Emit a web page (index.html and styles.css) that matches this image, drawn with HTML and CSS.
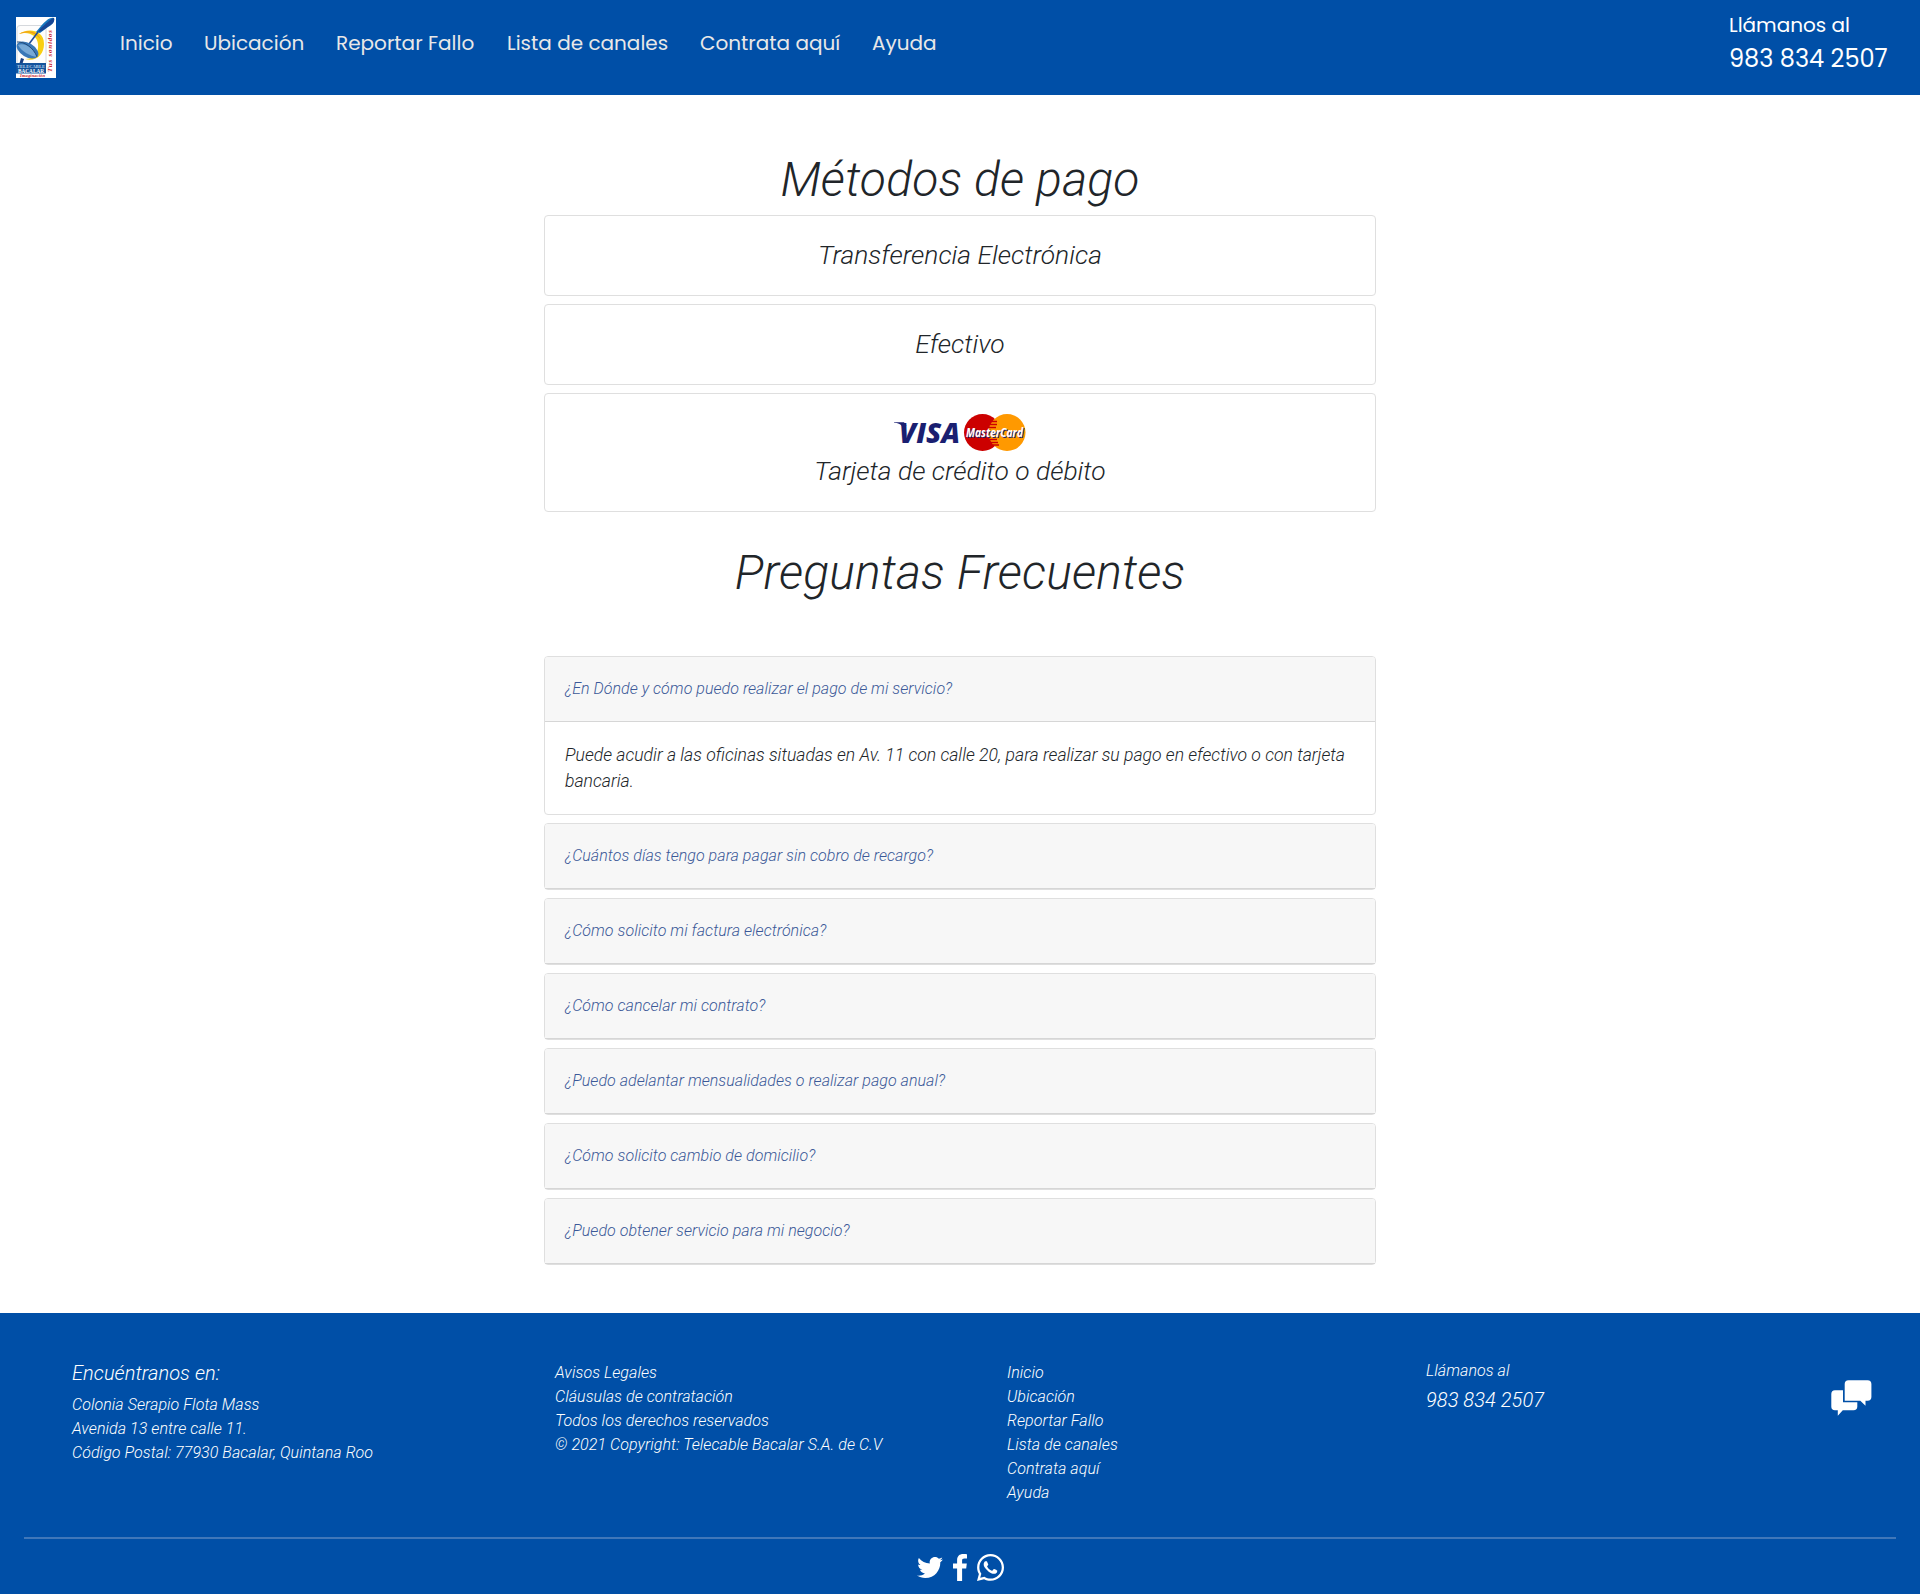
FILE: index.html
```html
<!DOCTYPE html>
<html lang="es">
<head>
<meta charset="utf-8">
<title>Telecable Bacalar - Ayuda</title>
<link rel="stylesheet" href="styles.css">
</head>
<body>
<header class="navbar">
  <a class="brand" href="#" aria-label="Telecable Bacalar">
    <svg width="40" height="61" viewBox="0 0 40 61">
      <rect width="40" height="61" fill="#fff"/>
      <rect x="1" y="8.500" width="29" height="40" rx="3" fill="#fdfdfd" stroke="#d5d8dc"/>
      <path d="M3 17C11 11 28 12 28 27C28 38 20 45 9 42C18 42 23 36 22 27C21 18 12 14 3 17Z" fill="#f8cf12"/>
      <path d="M3 17C11 12 22 14 25 23C20 15 11 14 3 17Z" fill="#f09a1a"/>
      <path d="M38 1C33 0 29 5 25 9L20 15L24 16L32 10C36 8 39 5 38 1Z" fill="#1676bd"/>
      <path d="M38 1C34 2 30 7 25 11L22 15L26 14L33 9C37 7 39 4 38 1Z" fill="#164594"/>
      <path d="M22 15L13 27" stroke="#204b97" stroke-width="1.500"/>
      <path d="M5 41L8 42L6 48H3Z" fill="#173f84"/>
      <ellipse cx="11.500" cy="33" rx="12" ry="7" transform="rotate(31 11.500 33)" fill="#3978b7"/>
      <path d="M2 28C9 25 18 32 21 40C14 39 6 35 2 28Z" fill="#77a9d6"/>
      <path d="M1 25C8 24 18 31 21 40" fill="none" stroke="#244b78" stroke-width="1"/>
      <rect y="46" width="30" height="10.500" fill="#15549c"/>
      <text x="1" y="51" class="logo-name" textLength="28" lengthAdjust="spacingAndGlyphs">TELECABLE</text>
      <text x="2" y="56" class="logo-city" textLength="26" lengthAdjust="spacingAndGlyphs">BACALAR</text>
      <text x="4" y="60.200" class="logo-tag" textLength="25">Imaginación</text>
      <text transform="translate(35.500 55) rotate(-90)" class="logo-side" textLength="42">Tus sonidos</text>
    </svg>
  </a>
  <nav class="menu">
    <a class="m-inicio" href="#">Inicio</a>
    <a class="m-ubicacion" href="#">Ubicación</a>
    <a class="m-reportar" href="#">Reportar Fallo</a>
    <a class="m-lista" href="#">Lista de canales</a>
    <a class="m-contrata" href="#">Contrata aquí</a>
    <a class="m-ayuda" href="#">Ayuda</a>
  </nav>
  <div class="call"><span class="call-label">Llámanos al</span><span class="call-number">983 834 2507</span></div>
</header>

<main class="content">
  <h1>Métodos de pago</h1>
  <section class="stack">
    <div class="card pay">Transferencia Electrónica</div>
    <div class="card pay">Efectivo</div>
    <div class="card pay">
      <svg class="cards-logo" width="134" height="38" viewBox="0 0 134 38">
        <text x="6" y="28.700" class="visa" textLength="61" lengthAdjust="spacingAndGlyphs">VISA</text>
        <path d="M1 8.300H11L13.500 12H9C7.500 10 5 9 1 8.700Z" fill="#1a1f71"/>
        <circle cx="89.500" cy="18.500" r="18.500" fill="#c00"/>
        <circle cx="114" cy="18.500" r="18.500" fill="#f90"/>
        <path d="M98 7.500H104M97 10.500H104M96 13.500H103M97 25.500H104M98 28.500H105M100 31H106" stroke="#c00" stroke-width="1.400"/>
        <text x="74" y="24" class="mc mc-shadow" textLength="57" lengthAdjust="spacingAndGlyphs">MasterCard</text>
        <text x="73" y="23" class="mc" textLength="57" lengthAdjust="spacingAndGlyphs">MasterCard</text>
      </svg>
      <div>Tarjeta de crédito o débito</div>
    </div>
  </section>

  <h2>Preguntas Frecuentes</h2>
  <section class="stack">
    <div class="card">
      <a class="question" href="#">¿En Dónde y cómo puedo realizar el pago de mi servicio?</a>
      <p class="answer">Puede acudir a las oficinas situadas en Av. 11 con calle 20, para realizar su pago en efectivo o con tarjeta bancaria.</p>
    </div>
    <div class="card"><a class="question" href="#">¿Cuántos días tengo para pagar sin cobro de recargo?</a></div>
    <div class="card"><a class="question" href="#">¿Cómo solicito mi factura electrónica?</a></div>
    <div class="card"><a class="question" href="#">¿Cómo cancelar mi contrato?</a></div>
    <div class="card"><a class="question" href="#">¿Puedo adelantar mensualidades o realizar pago anual?</a></div>
    <div class="card"><a class="question" href="#">¿Cómo solicito cambio de domicilio?</a></div>
    <div class="card"><a class="question" href="#">¿Puedo obtener servicio para mi negocio?</a></div>
  </section>
</main>

<footer class="footer">
  <div class="columns">
    <div class="address">
      <h5>Encuéntranos en:</h5>
      <p>Colonia Serapio Flota Mass</p>
      <p>Avenida 13 entre calle 11.</p>
      <p>Código Postal: 77930 Bacalar, Quintana Roo</p>
    </div>
    <div class="list">
      <a href="#">Avisos Legales</a>
      <a href="#">Cláusulas de contratación</a>
      <a href="#">Todos los derechos reservados</a>
      <p>© 2021 Copyright: Telecable Bacalar S.A. de C.V</p>
    </div>
    <div class="list">
      <a href="#">Inicio</a>
      <a href="#">Ubicación</a>
      <a href="#">Reportar Fallo</a>
      <a href="#">Lista de canales</a>
      <a href="#">Contrata aquí</a>
      <a href="#">Ayuda</a>
    </div>
    <div class="phone"><p>Llámanos al</p><p class="phone-number">983 834 2507</p></div>
    <a class="chat" href="#" aria-label="Chat">
      <svg width="41" height="36" viewBox="0 0 41 36" fill="#fff">
        <path d="M17.500 .2H36.500Q40.400 .2 40.400 4V17Q40.400 20.700 36.500 20.700H34.500V25.700L29.300 20.700H13.700V4Q13.700 .2 17.500 .2Z"/>
        <path d="M4 10.200H12V22.300H26.300V26.500Q26.300 30.300 22.500 30.300H11.800L6.800 35.800V30.300H4Q.3 30.300 .3 26.500V14Q.3 10.200 4 10.200Z"/>
      </svg>
    </a>
  </div>
  <div class="social">
    <a href="#" aria-label="Twitter"><svg width="26" height="21" viewBox="0 48 512 416" fill="#fff"><path d="M459.37 151.716c.325 4.548.325 9.097.325 13.645 0 138.72-105.583 298.558-298.558 298.558-59.452 0-114.68-17.219-161.137-47.106 8.447.974 16.568 1.299 25.34 1.299 49.055 0 94.213-16.568 130.274-44.832-46.132-.975-84.792-31.188-98.112-72.772 6.498.974 12.995 1.624 19.818 1.624 9.421 0 18.843-1.3 27.614-3.573-48.081-9.747-84.143-51.98-84.143-102.985v-1.299c13.969 7.797 30.214 12.67 47.431 13.319-28.264-18.843-46.781-51.005-46.781-87.391 0-19.492 5.197-37.36 14.294-52.954 51.655 63.675 129.3 105.258 216.365 109.807-1.624-7.797-2.599-15.918-2.599-24.04 0-57.828 46.782-104.934 104.934-104.934 30.213 0 57.502 12.67 76.67 33.137 23.715-4.548 46.456-13.32 66.599-25.34-7.798 24.366-24.366 44.833-46.132 57.827 21.117-2.273 41.584-8.122 60.426-16.243-14.292 20.791-32.161 39.308-52.628 54.253z"/></svg></a>
    <a href="#" aria-label="Facebook"><svg width="14" height="27" viewBox="0 0 14 27" fill="#fff"><path d="M14 .2V4.500H11.400C9.500 4.500 9.100 5.400 9.100 6.800V9.600H13.800L13.200 14.400H9.100V27H4.100V14.400H0V9.600H4.100V6.100C4.100 2.100 6.600 0 10.200 0C12 0 13.500.1 14 .2Z"/></svg></a>
    <a href="#" aria-label="WhatsApp"><svg width="27" height="27" viewBox="0 32 448 448" fill="#fff"><path d="M380.900 97.100C339 55.100 283.200 32 223.900 32c-122.400 0-222 99.600-222 222 0 39.100 10.200 77.300 29.600 111L0 480l117.700-30.900c32.400 17.700 68.900 27 106.100 27h.1c122.300 0 224.100-99.600 224.100-222 0-59.300-25.200-115-67.100-157zm-157 341.600c-33.200 0-65.700-8.900-94-25.700l-6.700-4-69.800 18.300L72 359.200l-4.400-7c-18.500-29.400-28.200-63.300-28.200-98.200 0-101.700 82.800-184.500 184.600-184.500 49.300 0 95.600 19.200 130.400 54.100 34.800 34.900 56.200 81.200 56.100 130.500 0 101.800-84.900 184.600-186.600 184.600zm101.200-138.200c-5.500-2.800-32.800-16.200-37.900-18-5.100-1.900-8.800-2.800-12.500 2.800-3.700 5.600-14.300 18-17.600 21.800-3.200 3.700-6.500 4.200-12 1.400-32.600-16.300-54-29.100-75.500-66-5.700-9.800 5.700-9.100 16.300-30.300 1.800-3.700.9-6.900-.5-9.700-1.400-2.800-12.500-30.100-17.100-41.200-4.500-10.800-9.100-9.300-12.500-9.500-3.200-.2-6.900-.2-10.600-.2-3.700 0-9.700 1.400-14.800 6.900-5.100 5.600-19.400 19-19.400 46.300 0 27.300 19.900 53.700 22.600 57.400 2.800 3.700 39.100 59.700 94.800 83.800 35.200 15.200 49 16.500 66.600 13.900 10.700-1.600 32.800-13.400 37.400-26.400 4.600-13 4.600-24.100 3.200-26.400-1.300-2.500-5-3.900-10.500-6.600z"/></svg></a>
  </div>
</footer>
</body>
</html>
```
FILE: styles.css
```css
* { box-sizing: border-box; }

body {
  margin: 0;
  background: #fff;
  color: #212529;
  font: italic 300 16px/24px Roboto, sans-serif;
}

h1, h2, h5, p { margin: 0; font-weight: 300; }
a { color: inherit; text-decoration: none; }
svg { display: block; overflow: visible; }

/* Top bar */
.navbar {
  display: flex;
  height: 95px;
  padding: 0 31px 0 16px;
  background: #004fa7;
  color: #fff;
  font-family: Poppins, Inter, sans-serif;
  font-style: normal;
  font-weight: 400;
}
.brand { padding-top: 17px; margin-right: 64px; }
.menu { display: flex; gap: 32px; padding-top: 28px; font-size: 20px; line-height: 30px; color: #e8e8e8; white-space: nowrap; }
.m-inicio { width: 52px; }
.m-ubicacion { width: 100px; }
.m-reportar { width: 139px; }
.m-lista { width: 161px; }
.m-contrata { width: 140px; }
.m-ayuda { width: 65px; }
.call { display: flex; flex-direction: column; gap: 1px; width: 160px; margin-left: auto; padding-top: 10px; white-space: nowrap; }
.call-label { font-size: 20px; line-height: 30px; }
.call-number { font-size: 24px; line-height: 36px; }

.logo-name { font: 700 5px "Liberation Serif", serif; fill: #b9d4ef; }
.logo-city { font: 700 6px "Liberation Serif", serif; fill: #fff; }
.logo-tag { font: italic 700 4.500px "Liberation Serif", serif; fill: #c8202c; }
.logo-side { font: italic 700 7px "Liberation Serif", serif; fill: #c8202c; }

/* Main column */
.content { width: 832px; height: 1218px; margin: 0 auto; padding-top: 56px; }
h1, h2 { font-size: 48px; line-height: 58px; text-align: center; letter-spacing: 0.190px; }
h1 { margin-bottom: 6px; }
h2 { margin: 32px 0 54px; }
.stack { display: flex; flex-direction: column; gap: 8px; }
.card { border: 1px solid #dfdfdf; border-radius: 4px; background: #fff; }
.pay { padding: 20px; font-size: 26.400px; line-height: 39px; text-align: center; }
.cards-logo { margin: 0 auto; }
.visa { font: italic 800 28px "Open Sans", sans-serif; fill: #1a1f71; }
.mc { font: italic 700 13px "Open Sans", sans-serif; fill: #fff; }
.mc-shadow { fill: #1f2369; }
.question {
  display: block;
  padding: 20px;
  border-bottom: 1px solid #d6d6d6;
  border-radius: 3px 3px 0 0;
  background: #f7f7f7;
  color: #3b5998;
  letter-spacing: 0.045px;
}
.answer { padding: 20px; font-size: 17.600px; line-height: 26px; }

/* Footer */
.footer { height: 281px; padding: 0 24px; background: #004fa7; color: #fff; letter-spacing: 0.065px; }
.columns {
  display: grid;
  grid-template-columns: 483px 452px 419px 405px 1fr;
  height: 226px;
  padding: 44px 0 0 48px;
  border-bottom: 2px solid #4077b9;
}
.address h5 { font-size: 20px; line-height: 24px; margin: 4px 0 8px; }
.list { display: flex; flex-direction: column; padding-top: 4px; }
.phone { padding-top: 2px; }
.phone-number { font-size: 20px; margin-top: 5px; }
.chat { padding-top: 23px; }
.social { display: flex; justify-content: center; align-items: center; gap: 10px; padding-top: 15px; }
```
